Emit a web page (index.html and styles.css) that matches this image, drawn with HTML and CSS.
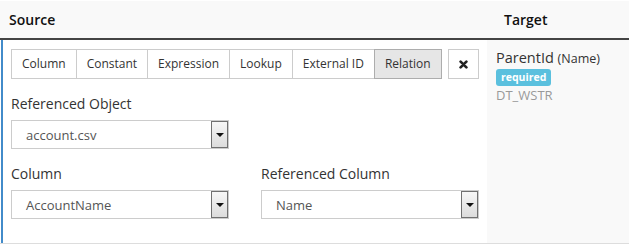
FILE: index.html
```html
<!DOCTYPE html>
<html>
<head>
    <title>Mapping</title>
    <link rel="stylesheet" href="styles.css">
</head>
<body>
    <div class="mapping">
        <div class="head">
            <div class="head-source">Source</div>
            <div class="head-target">Target</div>
        </div>
        <div class="row">
            <div class="source">
                <div class="toolbar">
                    <div class="tabs">
                        <span class="tab">Column</span>
                        <span class="tab">Constant</span>
                        <span class="tab">Expression</span>
                        <span class="tab">Lookup</span>
                        <span class="tab">External ID</span>
                        <span class="tab active">Relation</span>
                    </div>
                    <span class="remove">
                        <svg width="9" height="9" viewBox="0 0 10 10">
                            <path d="M1.8 1.8 L8.2 8.2 M8.2 1.8 L1.8 8.2" stroke="#222" stroke-width="3" stroke-linecap="round"/>
                        </svg>
                    </span>
                </div>

                <div class="field">
                    <label>Referenced Object</label>
                    <div class="select">
                        <span class="value">account.csv</span>
                        <span class="arrow"></span>
                    </div>
                </div>

                <div class="pair">
                    <div class="field">
                        <label>Column</label>
                        <div class="select">
                            <span class="value">AccountName</span>
                            <span class="arrow"></span>
                        </div>
                    </div>
                    <div class="field">
                        <label>Referenced Column</label>
                        <div class="select">
                            <span class="value">Name</span>
                            <span class="arrow"></span>
                        </div>
                    </div>
                </div>
            </div>
            <div class="target">
                <div class="name">ParentId <small>(Name)</small></div>
                <div class="badge">required</div>
                <div class="type">DT_WSTR</div>
            </div>
        </div>
    </div>
</body>
</html>
```

FILE: styles.css
```css
body {
    margin: 0;
    background-color: #fff;
    font-family: "Open Sans", "DejaVu Sans", sans-serif;
    color: #333;
}

.mapping {
    width: 629px;
    padding-top: 1px;
}

.head {
    display: grid;
    grid-template-columns: 487px 1fr;
    height: 37px;
    background-color: #f9f9f9;
    border-bottom: 2px solid #444;
    font-size: 14px;
    font-weight: 600;
    color: #111;
}

.head-source {
    padding: 9px 9px 0;
}

.head-target {
    padding: 9px 17px 0;
}

.row {
    display: grid;
    grid-template-columns: 487px 1fr;
    border-bottom: 1px solid #ddd;
    height: 203px;
}

.source {
    border-left: 2px solid #428bca;
    margin-left: 1px;
    padding: 9px 8px 0 8px;
}

.toolbar {
    display: flex;
    gap: 6px;
}

.tabs {
    display: flex;
}

.tab {
    height: 28px;
    line-height: 28px;
    padding: 0 10px;
    border: 1px solid #ccc;
    margin-left: -1px;
    font-size: 12px;
    color: #333;
    white-space: nowrap;
}

.tab:first-child {
    margin-left: 0;
}

.tab.active {
    background-color: #e6e6e6;
    border-color: #adadad;
    position: relative;
}

.remove {
    width: 29px;
    height: 28px;
    border: 1px solid #ccc;
    display: flex;
    align-items: center;
    justify-content: center;
}

.field {
    margin-top: 15px;
}

.field label {
    display: block;
    font-size: 14px;
    line-height: 20px;
    margin-bottom: 6px;
    color: #333;
}

.pair {
    display: flex;
    gap: 32px;
}

.select {
    width: 216px;
    height: 27px;
    border: 1px solid #ccc;
    display: flex;
    align-items: center;
    justify-content: space-between;
}

.select .value {
    padding-left: 14px;
    font-size: 13px;
    color: #555;
}

.arrow {
    width: 15px;
    height: 25px;
    border: 1px solid #707070;
    background: linear-gradient(#f6f6f6, #dcdcdc);
    display: flex;
    align-items: center;
    justify-content: center;
}

.arrow::after {
    content: "";
    border-left: 4px solid transparent;
    border-right: 4px solid transparent;
    border-top: 4px solid #111;
}

.target {
    background-color: #f9f9f9;
    padding: 8px 9px 0;
}

.name {
    font-size: 14.5px;
    color: #333;
    line-height: 19px;
}

.name small {
    font-size: 12.5px;
}

.badge {
    width: fit-content;
    margin-top: 1px;
    background-color: #5bc0de;
    color: #fff;
    font-size: 10.5px;
    font-weight: 700;
    line-height: 17px;
    padding: 0 5px;
    border-radius: 3px;
}

.type {
    font-size: 13px;
    color: #999;
    line-height: 17px;
    margin-top: 1px;
}
```
